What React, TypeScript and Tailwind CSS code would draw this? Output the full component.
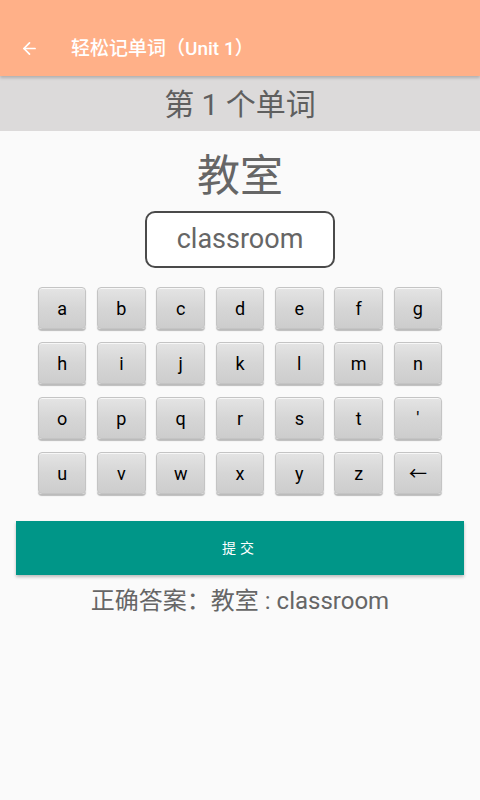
import { ArrowLeft } from "lucide-react";

const rows = [
  ["a", "b", "c", "d", "e", "f", "g"],
  ["h", "i", "j", "k", "l", "m", "n"],
  ["o", "p", "q", "r", "s", "t", "'"],
  ["u", "v", "w", "x", "y", "z", "←"],
];

function Key({ label }: { label: string }) {
  return (
    <button className="w-[48.5px] h-[42px] rounded-[4px] bg-gradient-to-b from-[#e4e4e4] via-[#d6d6d6] to-[#cdcdcd] border border-[#c4c4c4] shadow-[0_2px_1px_rgba(0,0,0,0.25),inset_0_1px_0_rgba(255,255,255,0.7)] flex items-center justify-center pt-[2px] text-[18px] text-black leading-none">
      {label}
    </button>
  );
}

export default function App() {
  return (
    <div
      className="w-[480px] h-[800px] bg-[#fafafa] flex flex-col"
      style={{ fontFamily: '"Roboto", "Noto Sans CJK SC", sans-serif' }}
    >
      <div className="h-[76px] bg-[#ffb088] flex items-end pb-[13px] pl-[20px] gap-[32px] shadow-[0_2px_3px_rgba(0,0,0,0.2)] relative z-10">
        <ArrowLeft size={19} strokeWidth={2.2} className="text-white mb-[5px]" />
        <span className="text-white text-[19px] font-medium">轻松记单词（Unit 1）</span>
      </div>

      <div className="h-[55px] bg-[#dcdada] flex items-center justify-center text-[30px] text-[#5f5f5f] pt-[2px]">
        第 1 个单词
      </div>

      <div className="flex flex-col items-center">
        <div className="mt-[16px] text-[43px] leading-[58px] text-[#666]">教室</div>

        <div className="mt-[6px] w-[190px] h-[57px] rounded-[10px] border-2 border-[#4a4a4a] bg-white flex items-center justify-center text-[27px] text-[#666]">
          classroom
        </div>

        <div className="mt-[19px] flex flex-col gap-[13px]">
          {rows.map((row, i) => (
            <div key={i} className="flex gap-[10.8px]">
              {row.map((k) => (
                <Key key={k} label={k} />
              ))}
            </div>
          ))}
        </div>
      </div>

      <div className="px-[16px] mt-[27px]">
        <button className="w-full h-[54px] bg-[#009688] text-white text-[14px] tracking-[4px] shadow-[0_2px_3px_rgba(0,0,0,0.25)]">
          提交
        </button>
      </div>

      <div className="mt-[8px] text-center text-[24px] text-[#666]">
        正确答案：教室 : classroom
      </div>
    </div>
  );
}
